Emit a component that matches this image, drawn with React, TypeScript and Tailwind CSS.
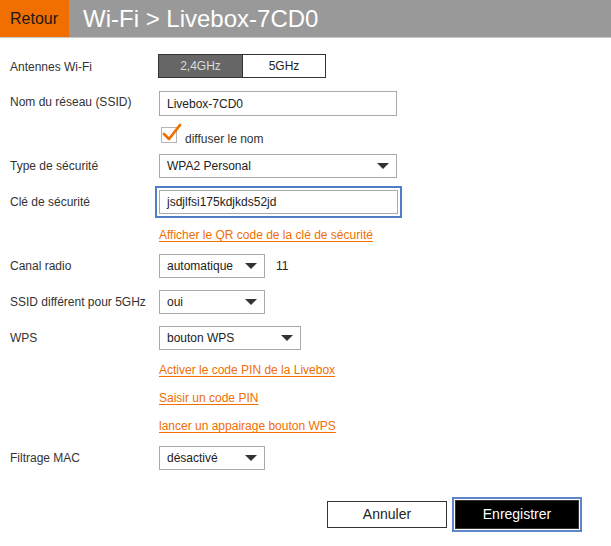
import React from 'react';

const Arrow = () => (
  <svg width="12" height="6" viewBox="0 0 12 6" className="shrink-0">
    <path d="M0 0 H12 L6 6 Z" fill="#333" />
  </svg>
);

const Select: React.FC<{ value: string; width: string }> = ({ value, width }) => (
  <div className={`${width} h-[24px] border border-[#a9a9a9] bg-white flex items-center justify-between pl-[7px] pr-[7px] text-[12px] text-[#222]`}>
    <span>{value}</span>
    <Arrow />
  </div>
);

const Label: React.FC<{ children: React.ReactNode }> = ({ children }) => (
  <div className="w-[159px] shrink-0 pl-[10px] text-[12px] text-[#333] leading-[14px]">{children}</div>
);

const LinkRow: React.FC<{ text: string; mt: string }> = ({ text, mt }) => (
  <div className={`${mt} flex`}>
    <div className="w-[159px] shrink-0" />
    <a className="text-[12px] leading-[14px] text-[#f16e00] underline underline-offset-[2px] cursor-pointer">{text}</a>
  </div>
);

export default function App() {
  return (
    <div className="w-[611px] h-[546px] bg-white font-['Liberation_Sans',Arial,sans-serif] overflow-hidden">
      <div className="flex h-[38px] border-b border-[#c8c8c8]">
        <div className="w-[69px] bg-[#f16e00] flex items-center pl-[10px] text-[16px] text-[#1a1a1a]">Retour</div>
        <div className="flex-1 bg-[#999999] flex items-center pl-[14px] text-[24px] text-white">Wi-Fi &gt; Livebox-7CD0</div>
      </div>

      {/* Antennes */}
      <div className="mt-[16px] flex items-start">
        <div className="pt-[6px]"><Label>Antennes Wi-Fi</Label></div>
        <div className="flex w-[168px] h-[24px] border border-[#333] -ml-[1px]">
          <div className="w-[84px] bg-[#666666] border-r border-[#333] flex items-center justify-center text-[12px] text-[#dcdcdc]">2,4GHz</div>
          <div className="flex-1 bg-white flex items-center justify-center text-[12px] text-[#222]">5GHz</div>
        </div>
      </div>

      {/* SSID */}
      <div className="mt-[13px] flex items-start">
        <div className="pt-[4px]"><Label>Nom du réseau (SSID)</Label></div>
        <div className="w-[238px] h-[25px] border border-[#a9a9a9] flex items-center pl-[7px] text-[12px] text-[#222]">Livebox-7CD0</div>
      </div>

      {/* diffuser */}
      <div className="mt-[11px] flex items-start h-[16px]">
        <div className="w-[161px] shrink-0" />
        <div className="relative w-[16px] h-[16px] border border-[#b5b5b5] bg-white">
          <svg width="21" height="19" viewBox="0 0 21 19" className="absolute -left-[1px] -top-[5px]">
            <path d="M3 11 L8 16 L19 2" fill="none" stroke="#f16e00" strokeWidth="2.8" strokeLinecap="round" strokeLinejoin="round" />
          </svg>
        </div>
        <span className="ml-[8px] text-[12px] leading-[14px] text-[#333] mt-[5px]">diffuser le nom</span>
      </div>

      {/* Type */}
      <div className="mt-[11px] flex items-start">
        <div className="pt-[5px]"><Label>Type de sécurité</Label></div>
        <Select value="WPA2 Personal" width="w-[238px]" />
      </div>

      {/* Clé */}
      <div className="mt-[8px] flex items-start">
        <div className="pt-[9px]"><Label>Clé de sécurité</Label></div>
        <div className="-ml-[4px] border-2 border-[#4f7ec6] p-[2px]">
          <div className="w-[239px] h-[24px] border border-[#a9a9a9] flex items-center pl-[7px] text-[12px] text-[#222]">jsdjlfsi175kdjkds52jd</div>
        </div>
      </div>

      <LinkRow mt="mt-[10px]" text="Afficher le QR code de la clé de sécurité" />

      {/* Canal */}
      <div className="mt-[12px] flex items-start">
        <div className="pt-[5px]"><Label>Canal radio</Label></div>
        <Select value="automatique" width="w-[106px]" />
        <span className="ml-[11px] mt-[5px] text-[12px] leading-[14px] text-[#222]">11</span>
      </div>

      <div className="mt-[12px] flex items-start">
        <div className="pt-[5px]"><Label>SSID différent pour 5GHz</Label></div>
        <Select value="oui" width="w-[106px]" />
      </div>

      <div className="mt-[12px] flex items-start">
        <div className="pt-[5px]"><Label>WPS</Label></div>
        <Select value="bouton WPS" width="w-[142px]" />
      </div>

      <LinkRow mt="mt-[13px]" text="Activer le code PIN de la Livebox" />
      <LinkRow mt="mt-[14px]" text="Saisir un code PIN" />
      <LinkRow mt="mt-[14px]" text="lancer un appairage bouton WPS" />

      <div className="mt-[13px] flex items-start">
        <div className="pt-[5px]"><Label>Filtrage MAC</Label></div>
        <Select value="désactivé" width="w-[106px]" />
      </div>

      <div className="mt-[27px] flex justify-end items-center gap-[5px] pr-[29px]">
        <button className="w-[120px] h-[27px] border border-[#333] bg-white text-[14px] text-[#222]">Annuler</button>
        <div className="border-2 border-[#5b86c8] p-[1px]">
          <button className="w-[124px] h-[29px] bg-black text-[14px] text-white border border-[#333]">Enregistrer</button>
        </div>
      </div>
    </div>
  );
}
